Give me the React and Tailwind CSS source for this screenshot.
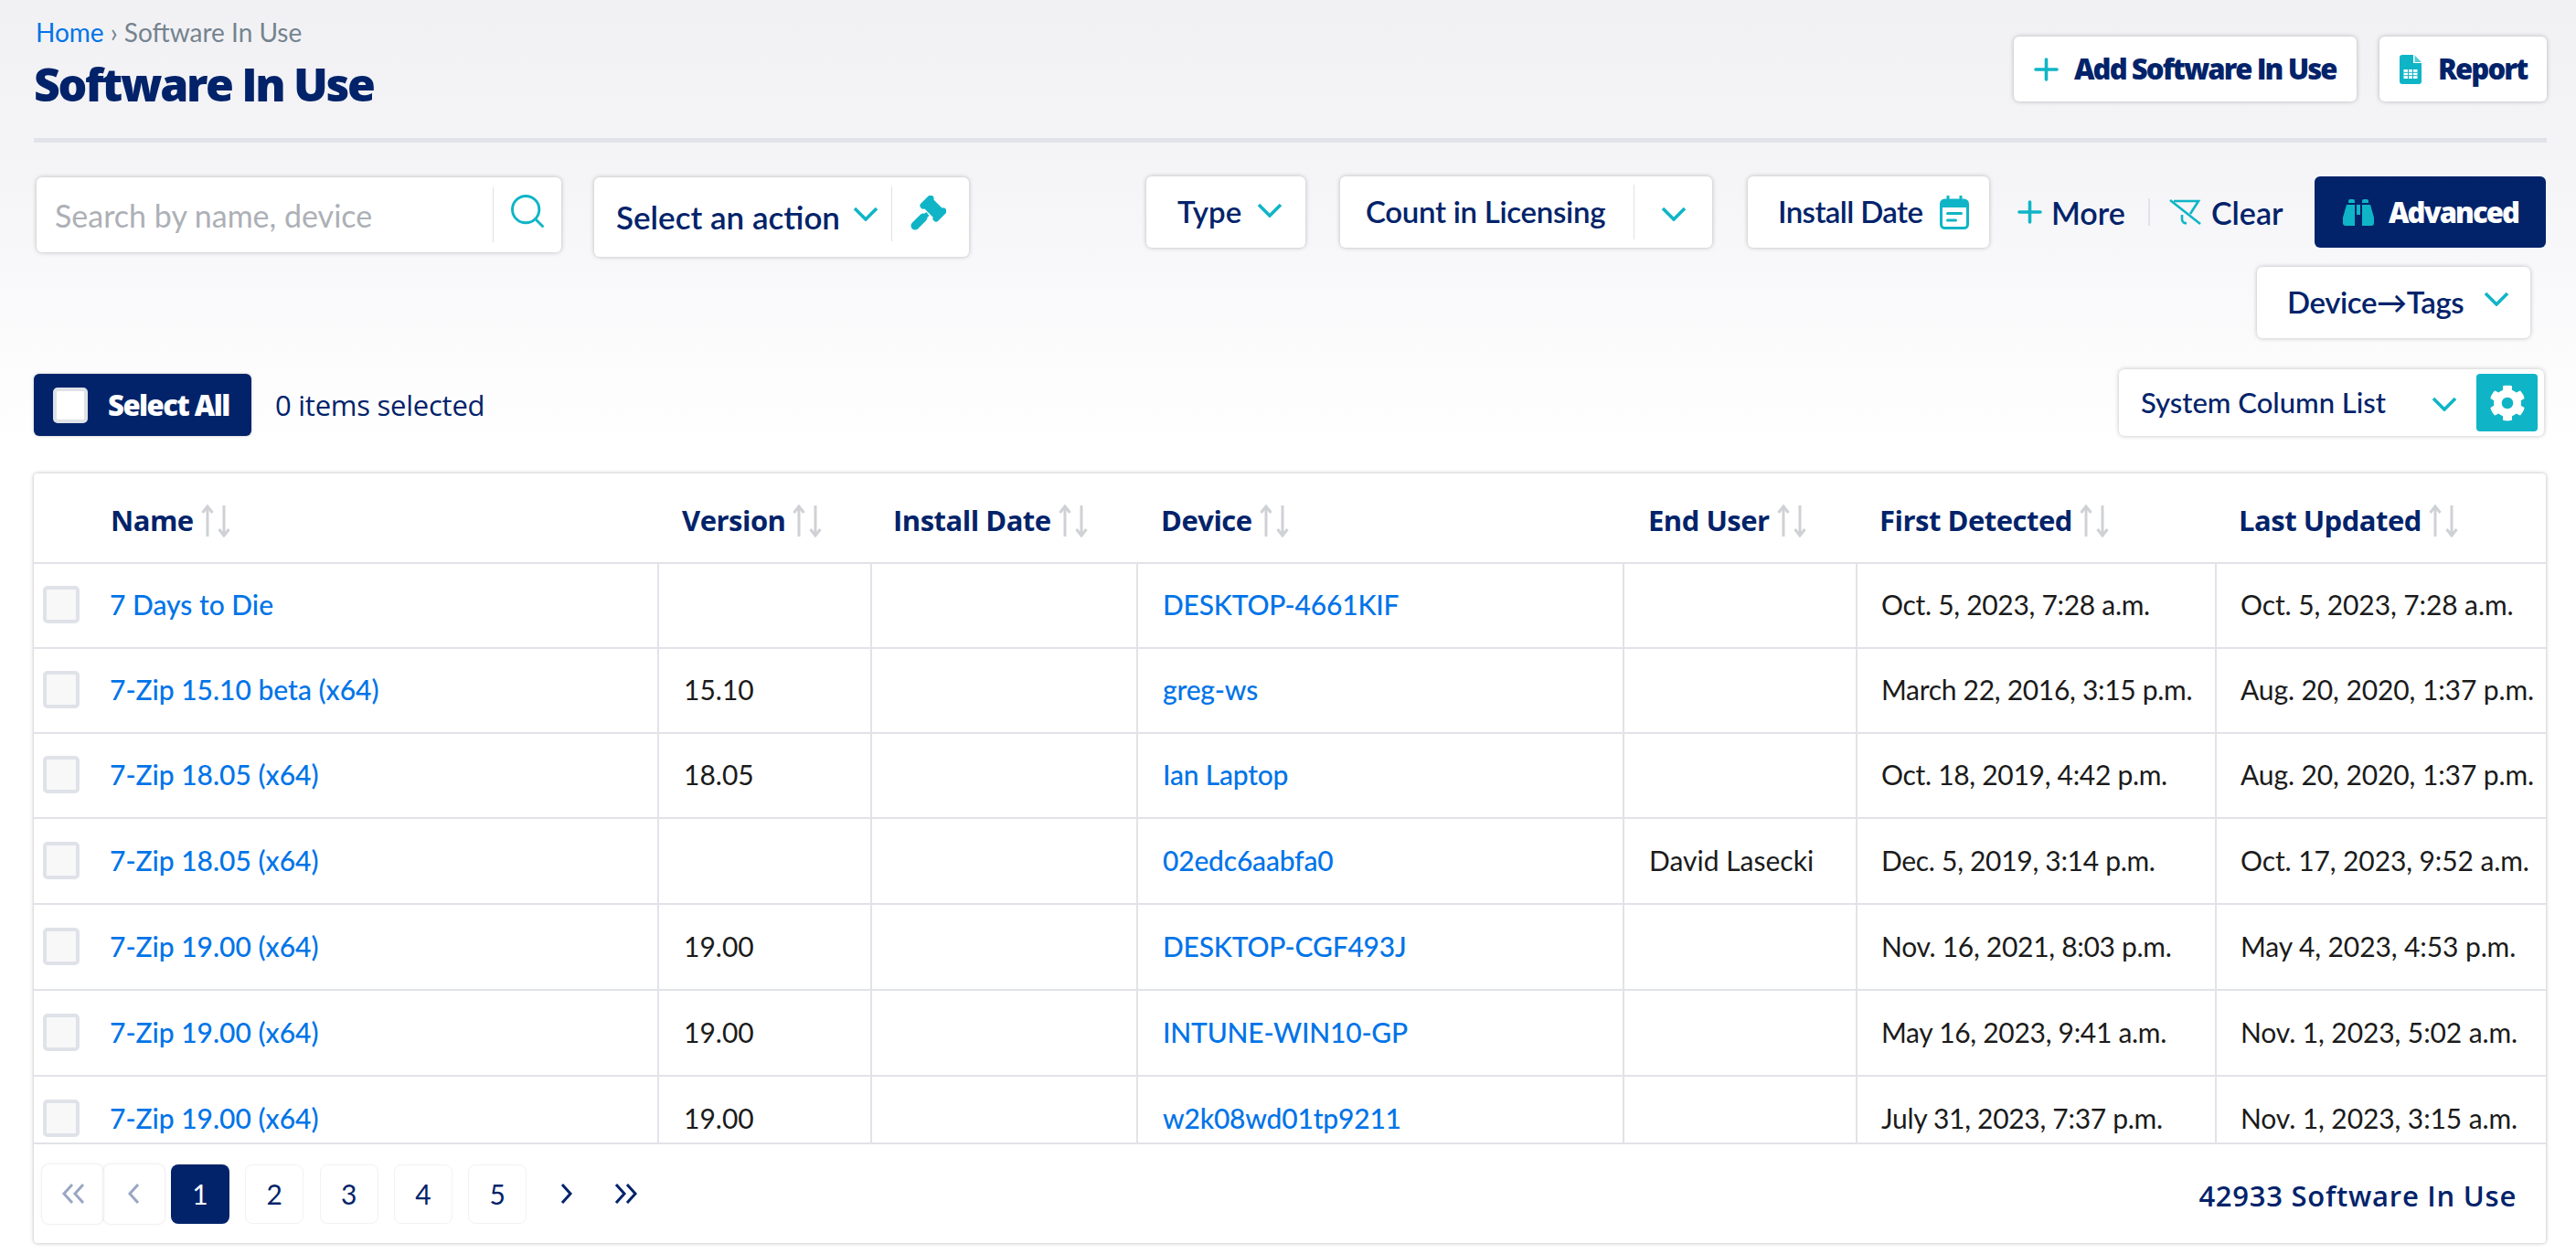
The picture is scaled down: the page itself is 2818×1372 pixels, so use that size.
import React from "react";
import { Search } from "lucide-react";
import { FaCog } from "react-icons/fa";

const rows = [
  { name: "7 Days to Die", version: "", device: "DESKTOP-4661KIF", user: "", first: "Oct. 5, 2023, 7:28 a.m.", last: "Oct. 5, 2023, 7:28 a.m." },
  { name: "7-Zip 15.10 beta (x64)", version: "15.10", device: "greg-ws", user: "", first: "March 22, 2016, 3:15 p.m.", last: "Aug. 20, 2020, 1:37 p.m." },
  { name: "7-Zip 18.05 (x64)", version: "18.05", device: "Ian Laptop", user: "", first: "Oct. 18, 2019, 4:42 p.m.", last: "Aug. 20, 2020, 1:37 p.m." },
  { name: "7-Zip 18.05 (x64)", version: "", device: "02edc6aabfa0", user: "David Lasecki", first: "Dec. 5, 2019, 3:14 p.m.", last: "Oct. 17, 2023, 9:52 a.m." },
  { name: "7-Zip 19.00 (x64)", version: "19.00", device: "DESKTOP-CGF493J", user: "", first: "Nov. 16, 2021, 8:03 p.m.", last: "May 4, 2023, 4:53 p.m." },
  { name: "7-Zip 19.00 (x64)", version: "19.00", device: "INTUNE-WIN10-GP", user: "", first: "May 16, 2023, 9:41 a.m.", last: "Nov. 1, 2023, 5:02 a.m." },
  { name: "7-Zip 19.00 (x64)", version: "19.00", device: "w2k08wd01tp9211", user: "", first: "July 31, 2023, 7:37 p.m.", last: "Nov. 1, 2023, 3:15 a.m." },
];

const Chevron = ({ className = "" }) => (
  <svg viewBox="0 0 28 16" className={`w-[28px] h-[16px] shrink-0 ${className}`} fill="none" stroke="#0fb5c6" strokeWidth="3.6">
    <path d="M2 2l12 12L26 2" />
  </svg>
);

const PlusIcon = ({ className = "" }) => (
  <svg viewBox="0 0 27 26" className={`w-[27px] h-[26px] shrink-0 ${className}`} stroke="#0fb5c6" strokeWidth="3.6" strokeLinecap="round">
    <path d="M13.5 2v22M2 13h23" />
  </svg>
);

const Pager = ({ dir, double, className = "" }) => (
  <svg viewBox="0 0 28 22" className={`w-[28px] h-[22px] ${className}`} fill="none" stroke="currentColor" strokeWidth="3">
    {dir === "left" ? (
      <>
        <path d={double ? "M13 1L4 11l9 10" : "M18 1L9 11l9 10"} />
        {double && <path d="M25 1l-9 10 9 10" />}
      </>
    ) : (
      <>
        <path d={double ? "M3 1l9 10-9 10" : "M10 1l9 10-9 10"} />
        {double && <path d="M15 1l9 10-9 10" />}
      </>
    )}
  </svg>
);

const SortHead = ({ label }) => (
  <span className="inline-flex items-center">
    <span className="font-['Open_Sans'] font-bold text-[#02236a] text-[31px] tracking-[-0.5px]">{label}</span>
    <svg viewBox="0 0 34 36" className="w-[34px] h-[36px] ml-[8px]" fill="none" stroke="#cfd1d5" strokeWidth="3">
      <path d="M7 35V3M1.5 9L7 2l5.5 7" />
      <path d="M25 1v32M19.5 27L25 34l5.5-7" />
    </svg>
  </span>
);

const PageNum = ({ n, active }) => (
  <button
    className={`w-[64px] h-[65px] rounded-[8px] text-[30px] flex items-center justify-center ${
      active ? "bg-[#02236a] text-white" : "border border-[#f2f2f4] text-[#02236a]"
    }`}
  >
    {n}
  </button>
);

const shadow = "shadow-[0_0_5px_rgba(0,0,0,0.25)] rounded-[6px] bg-white";

export default function App() {
  return (
    <div className="w-[2818px] h-[1372px] overflow-hidden bg-[linear-gradient(#f1f1f4,#f5f5f8_200px,#ffffff_490px)] pl-[37px] pr-[32px] font-['Lato'] text-[#02236a]">
      {/* Page header */}
      <div className="flex justify-between h-[151px]">
        <div className="pt-[17px]">
          <div className="text-[28px] leading-[36px] text-[#75838f] pl-[2px]">
            <span className="text-[#0074e8]">Home</span> › Software In Use
          </div>
          <h1 className="font-['Open_Sans'] font-extrabold text-[50px] leading-[60px] mt-[9px] tracking-[-2.35px]">Software In Use</h1>
        </div>
        <div className="flex gap-[25px] pt-[40px] items-start">
          <button className={`${shadow} h-[71px] w-[375px] flex items-center pl-[22px]`}>
            <PlusIcon />
            <span className="font-['Open_Sans'] font-extrabold text-[31px] ml-[17px] tracking-[-1.9px]">Add Software In Use</span>
          </button>
          <button className={`${shadow} h-[71px] w-[183px] flex items-center pl-[22px]`}>
            <svg viewBox="0 0 24 32" className="w-[24px] h-[32px]">
              <path d="M3 0h12v9h9v20a3 3 0 0 1-3 3H3a3 3 0 0 1-3-3V3a3 3 0 0 1 3-3z" fill="#0fb5c6" />
              <path d="M16.5 0.5L24 8h-7.5z" fill="#0fb5c6" opacity="0.7" />
              <path d="M4.5 16h15v10h-15z" fill="#fff" />
              <path d="M4.5 19.3h15M4.5 22.7h15M9.5 16v10M14.5 16v10" stroke="#0fb5c6" strokeWidth="1" fill="none" />
            </svg>
            <span className="font-['Open_Sans'] font-extrabold text-[31px] ml-[18px] tracking-[-1.9px]">Report</span>
          </button>
        </div>
      </div>
      <div className="h-[5px] bg-[#e1e3e8]" />

      {/* Filters */}
      <div className="flex justify-between mt-[37px]">
        <div className="flex items-start gap-[36px] pt-[1px] pl-[3px]">
          <div className={`${shadow} w-[574px] h-[82px] flex items-center`}>
            <span className="flex-1 pl-[20px] text-[34px] text-[#adb0b6]">Search by name, device</span>
            <span className="w-[1px] h-[60px] bg-[#dfe1e5]" />
            <Search className="w-[44px] h-[44px] text-[#0fb5c6] mx-[15px] -mt-[8px]" strokeWidth={1.6} />
          </div>
          <div className={`${shadow} w-[410px] h-[87px] flex items-center pl-[24px]`}>
            <span className="text-[35px] font-semibold w-[246px] whitespace-nowrap">Select an action</span>
            <Chevron className="ml-[13px] -mt-[8px]" />
            <span className="w-[1px] h-[60px] bg-[#dfe1e5] ml-[14px] -mt-[8px]" />
            <svg viewBox="0 0 39 39" className="w-[39px] h-[39px] ml-[20px] -mt-[9px]" fill="none" stroke="#0fb5c6">
              <path d="M14 11l8-8M28 25l8-8" strokeWidth="7" strokeLinecap="round" />
              <path d="M20 9l10 10" strokeWidth="14" />
              <path d="M5 33l9-9" strokeWidth="9" strokeLinecap="round" />
              <path d="M14 24l5-4" strokeWidth="5" />
            </svg>
          </div>
        </div>

        <div className="flex flex-col items-end gap-[21px]">
          <div className="flex items-center">
            <button className={`${shadow} w-[174px] h-[78px] flex items-center pl-[34px]`}>
              <span className="text-[33px] font-semibold">Type</span>
              <Chevron className="ml-[17px] -mt-[4px]" />
            </button>
            <div className={`${shadow} w-[407px] h-[78px] flex items-center ml-[38px]`}>
              <span className="pl-[28px] w-[321px] text-[33px] font-semibold tracking-[-0.3px]">Count in Licensing</span>
              <span className="w-[1px] h-[60px] bg-[#dfe1e5]" />
              <Chevron className="ml-[29px] mt-[3px]" />
            </div>
            <button className={`${shadow} w-[264px] h-[78px] flex items-center pl-[33px] ml-[39px]`}>
              <span className="text-[33px] font-semibold w-[177px] text-left whitespace-nowrap tracking-[-0.6px]">Install Date</span>
              <svg viewBox="0 0 32 37" className="w-[32px] h-[37px]">
                <path d="M9 0v7M23 0v7" stroke="#0fb5c6" strokeWidth="3" strokeLinecap="round" />
                <rect x="1.5" y="5" width="29" height="30.5" rx="4" fill="none" stroke="#0fb5c6" strokeWidth="3" />
                <path d="M1.5 9a4 4 0 0 1 4-4h21a4 4 0 0 1 4 4v4h-29z" fill="#0fb5c6" />
                <path d="M8.5 19.5h15M8.5 27h9" stroke="#0fb5c6" strokeWidth="3" strokeLinecap="round" />
              </svg>
            </button>
            <button className="flex items-center ml-[31px] w-[116px]">
              <PlusIcon />
              <span className="text-[34px] font-semibold ml-[10px]">More</span>
            </button>
            <span className="w-[2px] h-[30px] bg-[#e1e3e8] ml-[27px]" />
            <button className="flex items-center ml-[21px] w-[127px]">
              <svg viewBox="0 0 35 28" className="w-[35px] h-[28px] shrink-0" fill="none" stroke="#0fb5c6" strokeWidth="2.6">
                <path d="M5 2h27l-9 14" />
                <path d="M1 1l33 26" />
                <path d="M14 17v5a4 4 0 0 0 5 4" />
              </svg>
              <span className="text-[34px] font-semibold ml-[11px]">Clear</span>
            </button>
            <button className="w-[253px] h-[78px] rounded-[6px] bg-[#02236a] text-white flex items-center pl-[31px] ml-[32px] mr-[1px]">
              <svg viewBox="0 0 34 29" className="w-[34px] h-[29px]" fill="#0fb5c6">
                <path d="M6 2a2 2 0 0 1 2-2h3a2 2 0 0 1 2 2v2H6zM21 2a2 2 0 0 1 2-2h3a2 2 0 0 1 2 2v2h-7zM4 6h9v23H3a3 3 0 0 1-3-3v-6zM21 6h9l4 14v6a3 3 0 0 1-3 3H21z" />
                <path d="M15 6h4v11h-4z" />
              </svg>
              <span className="text-[31px] font-extrabold ml-[16px] font-['Open_Sans'] tracking-[-1.9px]">Advanced</span>
            </button>
          </div>
          <button className={`${shadow} w-[299px] h-[78px] flex items-center pl-[33px] mr-[18px]`}>
            <span className="text-[33px] font-semibold w-[197px] text-left whitespace-nowrap tracking-[-0.4px]">Device→Tags</span>
            <Chevron className="ml-[18px] -mt-[8px]" />
          </button>
        </div>
      </div>

      {/* Bulk select row */}
      <div className="flex justify-between items-end mt-[34px]">
        <div className="flex items-center">
          <button className="w-[238px] h-[68px] rounded-[6px] bg-[#02236a] text-white flex items-center pl-[21px] shadow-[0_0_3px_rgba(0,0,0,0.25)]">
            <span className="w-[38px] h-[39px] rounded-[5px] bg-white border-[4px] border-[#dfe2e8]" />
            <span className="font-['Open_Sans'] font-extrabold text-[31px] ml-[22px] tracking-[-1.5px] whitespace-nowrap">Select All</span>
          </button>
          <span className="ml-[26px] text-[31px] font-['Open_Sans'] tracking-[-0.25px]">0 items selected</span>
        </div>
        <div className={`${shadow} w-[465px] h-[73px] flex items-center mr-[3px]`}>
          <span className="pl-[24px] text-[31px] w-[338px] font-medium whitespace-nowrap">System Column List</span>
          <Chevron className="ml-[4px] mt-[3px]" />
          <span className="ml-[21px] w-[67px] h-[63px] rounded-[4px] bg-[#0fb5c6] flex items-center justify-center text-white text-[40px]">
            <FaCog />
          </span>
        </div>
      </div>

      {/* Table */}
      <div className="mt-[41px] w-[2748px] h-[842px] flex flex-col bg-white rounded-[4px] shadow-[0_0_4px_rgba(0,0,0,0.3)]">
        <div className="h-[732px] overflow-hidden">
          <table className="table-fixed w-full border-collapse text-[30px] text-[#1b1b1b]">
            <colgroup>
              <col className="w-[683px]" />
              <col className="w-[233px]" />
              <col className="w-[291px]" />
              <col className="w-[532px]" />
              <col className="w-[255px]" />
              <col className="w-[393px]" />
              <col />
            </colgroup>
            <thead>
              <tr className="h-[98px] border-b-[2px] border-[#e1e3e8] text-left">
                <th className="pl-[84px] pt-[6px] font-normal"><SortHead label="Name" /></th>
                <th className="pl-[26px] pt-[6px] font-normal"><SortHead label="Version" /></th>
                <th className="pl-[24px] pt-[6px] font-normal"><SortHead label="Install Date" /></th>
                <th className="pl-[26px] pt-[6px] font-normal"><SortHead label="Device" /></th>
                <th className="pl-[27px] pt-[6px] font-normal"><SortHead label="End User" /></th>
                <th className="pl-[25px] pt-[6px] font-normal"><SortHead label="First Detected" /></th>
                <th className="pl-[25px] pt-[6px] font-normal"><SortHead label="Last Updated" /></th>
              </tr>
            </thead>
            <tbody>
              {rows.map((row, i) => (
                <tr
                  key={i}
                  className={`${i < 3 ? "h-[93px]" : "h-[94px]"} border-b-[2px] border-[#e1e3e8] [&>td]:border-r-[2px] [&>td]:border-[#e1e3e8] [&>td:last-child]:border-r-0 [&>td]:pb-[2px]`}
                >
                  <td className="pl-[10px]">
                    <div className="flex items-center">
                      <span className="w-[40px] h-[41px] rounded-[5px] bg-[#f8f8f9] border-[4px] border-[#dfe2e8]" />
                      <a className="ml-[33px] text-[#0074e8] font-medium">{row.name}</a>
                    </div>
                  </td>
                  <td className="pl-[27px]">{row.version}</td>
                  <td />
                  <td className="pl-[27px] text-[#0074e8] font-medium tracking-[-0.2px]">{row.device}</td>
                  <td className="pl-[27px]">{row.user}</td>
                  <td className="pl-[26px] whitespace-nowrap tracking-[-0.3px]">{row.first}</td>
                  <td className="pl-[26px] whitespace-nowrap tracking-[-0.1px]">{row.last}</td>
                </tr>
              ))}
            </tbody>
          </table>
        </div>

        {/* Pagination */}
        <div className="flex-1 border-t-[2px] border-[#e1e3e8] flex items-center justify-between pl-[9px] pr-[32px]">
          <div className="flex items-center">
            <button className="w-[67px] h-[65px] rounded-[8px] shadow-[0_0_3px_rgba(0,0,0,0.15)] flex items-center justify-center text-[#9aa7c3]">
              <Pager dir="left" double />
            </button>
            <button className="w-[67px] h-[65px] rounded-[8px] shadow-[0_0_3px_rgba(0,0,0,0.15)] flex items-center justify-center text-[#9aa7c3]">
              <Pager dir="left" />
            </button>
            <div className="flex items-center gap-[17.3px] ml-[7px]">
              {[1, 2, 3, 4, 5].map((n) => (
                <PageNum key={n} n={n} active={n === 1} />
              ))}
            </div>
            <Pager dir="right" className="ml-[29px]" />
            <Pager dir="right" double className="ml-[38px]" />
          </div>
          <span className="font-['Open_Sans'] font-semibold text-[31px] tracking-[0.75px] mt-[4px]">42933 Software In Use</span>
        </div>
      </div>
    </div>
  );
}
